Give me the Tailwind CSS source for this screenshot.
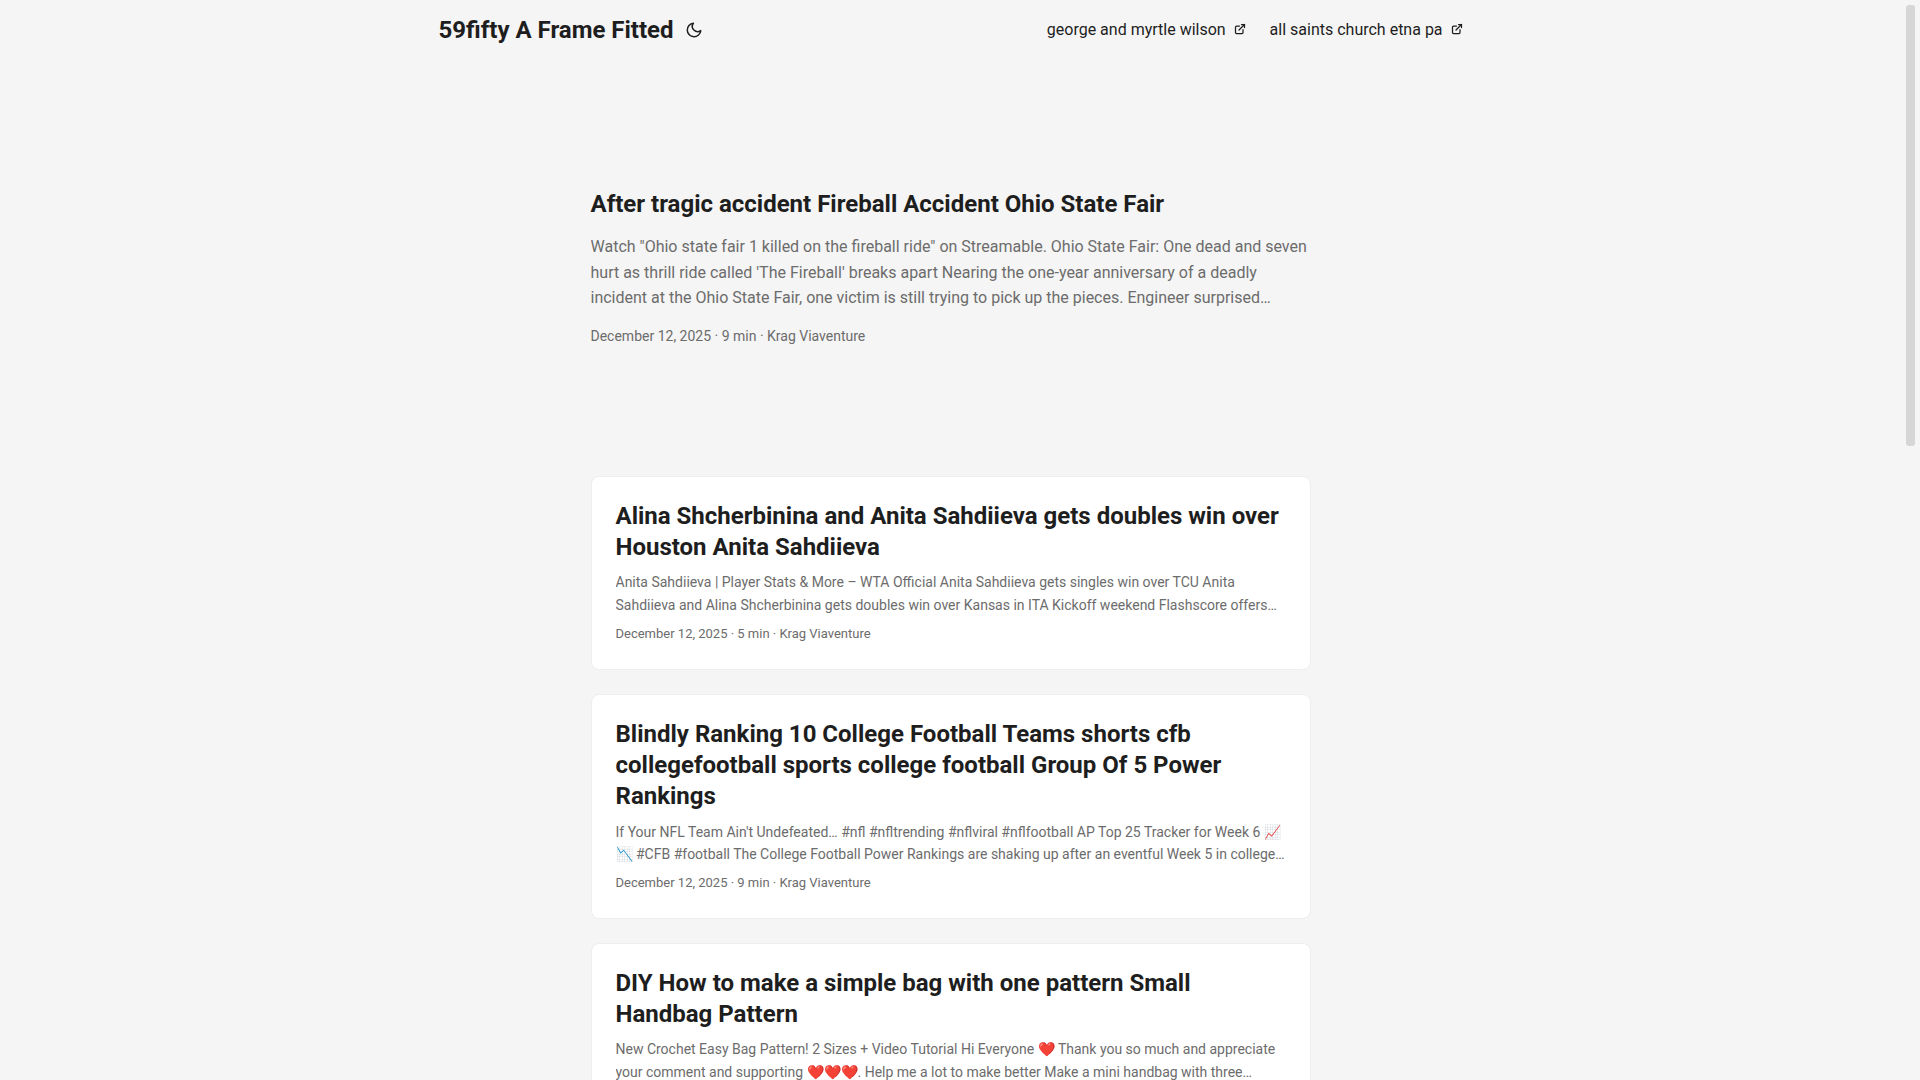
<!DOCTYPE html>
<html lang="en">
  <head>
    <meta charset="utf-8" />
    <meta name="viewport" content="width=device-width, initial-scale=1" />
    <title>59fifty A Frame Fitted</title>
    <script src="https://cdn.jsdelivr.net/npm/@tailwindcss/browser@4"></script>
  </head>
  <body class="flex h-screen overflow-hidden bg-[#f5f5f5] font-['Roboto',sans-serif] text-lg leading-[1.6] text-[#1e1e1e] wrap-break-word">
    <div id="page" class="min-w-0 flex-1 overflow-y-auto [scrollbar-width:none]">
      <header>
        <nav class="mx-auto flex max-w-[1072px] flex-wrap justify-between px-6 leading-[60px]">
          <div class="flex">
            <a href="#" class="text-2xl leading-[60px] font-bold">59fifty A Frame Fitted</a>
            <button type="button" class="ml-2 cursor-pointer" aria-label="Toggle theme">
              <svg class="h-[18px] w-6" viewBox="0 0 24 24" fill="none" stroke="currentColor" stroke-width="2" stroke-linecap="round" stroke-linejoin="round"><path d="M21 12.79A9 9 0 1 1 11.21 3 7 7 0 0 0 21 12.79z" /></svg>
            </button>
          </div>
          <ul class="flex gap-6 text-base leading-[60px]">
            <li>
              <a href="#">george and myrtle wilson&nbsp;
                <svg class="inline-block size-3 align-baseline" viewBox="0 0 24 24" fill="none" stroke="currentColor" stroke-width="2.5" stroke-linecap="round" stroke-linejoin="round" shape-rendering="geometricPrecision"><path d="M18 13v6a2 2 0 01-2 2H5a2 2 0 01-2-2V8a2 2 0 012-2h6" /><path d="M15 3h6v6" /><path d="M10 14L21 3" /></svg></a>
            </li>
            <li>
              <a href="#">all saints church etna pa&nbsp;
                <svg class="inline-block size-3 align-baseline" viewBox="0 0 24 24" fill="none" stroke="currentColor" stroke-width="2.5" stroke-linecap="round" stroke-linejoin="round" shape-rendering="geometricPrecision"><path d="M18 13v6a2 2 0 01-2 2H5a2 2 0 01-2-2V8a2 2 0 012-2h6" /><path d="M15 3h6v6" /><path d="M10 14L21 3" /></svg></a>
            </li>
          </ul>
        </nav>
      </header>

      <main class="mx-auto max-w-3xl p-6">
        <article class="mt-6 mb-12 flex min-h-80 flex-col justify-center">
          <h2 class="text-2xl leading-[1.3] font-bold"><a href="#">After tragic accident Fireball Accident Ohio State Fair</a></h2>
          <p class="my-3.5 line-clamp-3 text-base leading-[1.6] text-[#6c6c6c]">Watch "Ohio state fair 1 killed on the fireball ride" on Streamable. Ohio State Fair: One dead and seven hurt as thrill ride called 'The Fireball' breaks apart Nearing the one-year anniversary of a deadly incident at the Ohio State Fair, one victim is still trying to pick up the pieces. Engineer surprised…</p>
          <footer class="text-sm leading-[1.6] text-[#6c6c6c]">December 12, 2025&nbsp;·&nbsp;9 min&nbsp;·&nbsp;Krag Viaventure</footer>
        </article>

        <article class="mb-6 rounded-lg border border-[#eeeeee] bg-white p-6">
          <h2 class="text-2xl leading-[1.3] font-bold"><a href="#">Alina Shcherbinina and Anita Sahdiieva gets doubles win over Houston Anita Sahdiieva</a></h2>
          <p class="my-2 line-clamp-2 text-sm leading-[1.6] text-[#6c6c6c]">Anita Sahdiieva | Player Stats &amp; More – WTA Official Anita Sahdiieva gets singles win over TCU Anita Sahdiieva and Alina Shcherbinina gets doubles win over Kansas in ITA Kickoff weekend Flashscore offers…</p>
          <footer class="text-[13px] leading-[1.6] text-[#6c6c6c]">December 12, 2025&nbsp;·&nbsp;5 min&nbsp;·&nbsp;Krag Viaventure</footer>
        </article>

        <article class="mb-6 rounded-lg border border-[#eeeeee] bg-white p-6">
          <h2 class="text-2xl leading-[1.3] font-bold"><a href="#">Blindly Ranking 10 College Football Teams shorts cfb collegefootball sports college football Group Of 5 Power Rankings</a></h2>
          <p class="my-2 line-clamp-2 text-sm leading-[1.6] text-[#6c6c6c]">If Your NFL Team Ain't Undefeated… #nfl #nfltrending #nflviral #nflfootball AP Top 25 Tracker for Week 6 📈📉 #CFB #football The College Football Power Rankings are shaking up after an eventful Week 5 in college…</p>
          <footer class="text-[13px] leading-[1.6] text-[#6c6c6c]">December 12, 2025&nbsp;·&nbsp;9 min&nbsp;·&nbsp;Krag Viaventure</footer>
        </article>

        <article class="mb-6 rounded-lg border border-[#eeeeee] bg-white p-6">
          <h2 class="text-2xl leading-[1.3] font-bold"><a href="#">DIY How to make a simple bag with one pattern Small Handbag Pattern</a></h2>
          <p class="my-2 line-clamp-2 text-sm leading-[1.6] text-[#6c6c6c]">New Crochet Easy Bag Pattern! 2 Sizes + Video Tutorial Hi Everyone ❤️ Thank you so much and appreciate your comment and supporting ❤️❤️❤️. Help me a lot to make better Make a mini handbag with three…</p>
        </article>
      </main>
    </div>

    <!-- scrollbar -->
    <div class="w-[19px] shrink-0 p-[5px]" role="scrollbar" aria-controls="page" aria-orientation="vertical" aria-valuenow="0">
      <div class="h-[41.2%] rounded-[3px] bg-[#d6d6d6]"></div>
    </div>
  </body>
</html>
